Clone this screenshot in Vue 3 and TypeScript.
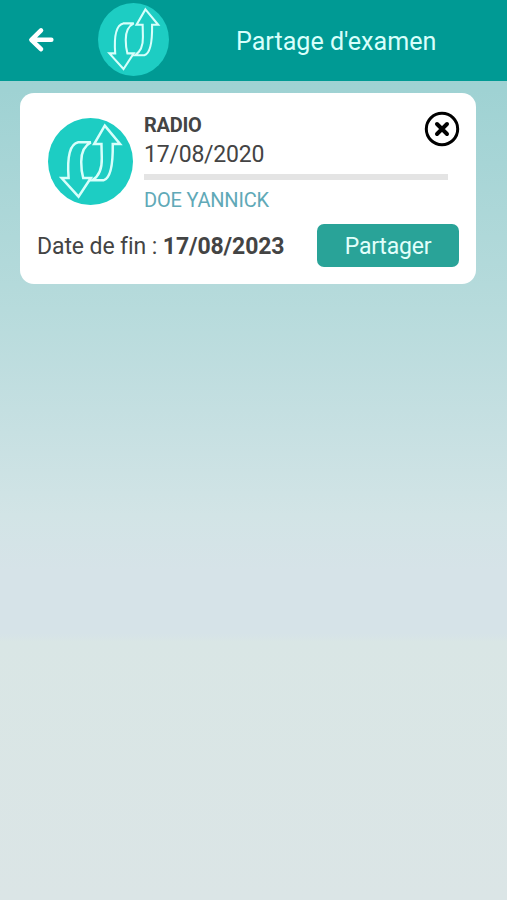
<script setup lang="ts">
import { defineComponent, h, ref } from 'vue'

interface Exam {
  id: number
  type: string
  date: string
  patient: string
  endDate: string
}

const exams = ref<Exam[]>([
  { id: 1, type: 'RADIO', date: '17/08/2020', patient: 'DOE YANNICK', endDate: '17/08/2023' },
])

function removeExam(id: number): void {
  exams.value = exams.value.filter((exam) => exam.id !== id)
}

const AppLogo = defineComponent({
  name: 'AppLogo',
  setup() {
    return () =>
      h('svg', { viewBox: '24 24 256 261', preserveAspectRatio: 'none', 'aria-hidden': 'true' }, [
        h('ellipse', { cx: 152, cy: 154.5, rx: 128, ry: 130.5, fill: '#1dcdc3' }),
        h('g', { fill: 'none', stroke: '#d8fffb', 'stroke-width': 7.5, 'stroke-linejoin': 'miter' }, [
          h('path', { d: 'M115 97H153C133 107 124 130 124 155C124 175 126 190 130 204H153L116 260L65 204H86C82 150 87 103 115 97Z' }),
          h('path', { d: 'M195 47L241 102H219C220 165 213 205 191 211H157C176 200 187 178 186 145L185 102H163Z' }),
        ]),
      ])
  },
})
</script>

<template>
  <div class="screen">
    <header class="bar">
      <button class="back" type="button" aria-label="Retour">
        <svg viewBox="0 0 26 26" width="26" height="26">
          <path d="M13 3.4L3.4 12.8L13 22.2M4 12.8H23.3" />
        </svg>
      </button>
      <AppLogo class="bar-logo" />
      <h1 class="title">Partage d'examen</h1>
    </header>

    <main class="list">
      <article v-for="exam in exams" :key="exam.id" class="card">
        <div class="top">
          <AppLogo class="card-logo" />
          <div class="info">
            <div class="heading">
              <div class="labels">
                <h2 class="type">{{ exam.type }}</h2>
                <p class="date">{{ exam.date }}</p>
              </div>
              <button class="close" type="button" aria-label="Fermer" @click="removeExam(exam.id)">
                <svg viewBox="0 0 36 36" width="36" height="36">
                  <circle cx="18" cy="18" r="15.7" />
                  <path d="M13 13L23 23M23 13L13 23" />
                </svg>
              </button>
            </div>
            <div class="rule"></div>
            <p class="patient">{{ exam.patient }}</p>
          </div>
        </div>
        <div class="bottom">
          <p class="end"><span>Date de fin : </span><strong>{{ exam.endDate }}</strong></p>
          <button class="share" type="button">Partager</button>
        </div>
      </article>
    </main>
  </div>
</template>

<style>
body {
  margin: 0;
}
</style>

<style scoped>
.screen {
  min-height: 900px;
  font-family: Roboto, sans-serif;
  color: #444;
  background: linear-gradient(180deg, #9dd1d3 0, #9fd2d3 90px, #b7dbdc 310px, #c4dfe1 410px, #d2e4e6 515px, #d6e3e8 570px, #d6e3e8 634px, #d9e6e5 642px, #dbe5e6 900px);
}
h1, h2, p {
  margin: 0;
  font-weight: 400;
  white-space: nowrap;
}
button {
  border: 0;
  padding: 0;
  background: none;
  font-family: inherit;
  cursor: pointer;
}
svg {
  display: block;
}
.bar {
  display: flex;
  align-items: center;
  box-sizing: border-box;
  height: 81px;
  padding: 0 0 2px 28px;
  background: #009a94;
}
.back {
  padding-top: 1px;
}
.back path {
  fill: none;
  stroke: #fff;
  stroke-width: 4.6;
  stroke-linecap: round;
  stroke-linejoin: round;
}
.bar-logo {
  width: 71px;
  height: 73px;
  margin-left: 44px;
}
.title {
  margin: 4px 0 0 67px;
  font-size: 25.1px;
  line-height: 32px;
  color: #d8fffb;
}
.list {
  padding: 12px 31px 0 20px;
}
.card {
  box-sizing: border-box;
  height: 191px;
  padding: 18px 17px 0;
  border-radius: 14px;
  background: #fff;
}
.top {
  display: flex;
  height: 104px;
}
.card-logo {
  flex: none;
  width: 85px;
  height: 87px;
  margin: 7px 11px 0;
}
.info {
  flex: 1;
}
.heading {
  display: flex;
  justify-content: space-between;
  height: 63px;
}
.type {
  font-size: 20px;
  letter-spacing: -0.25px;
  line-height: 28px;
  font-weight: 700;
}
.date {
  font-size: 23px;
  letter-spacing: -0.22px;
  line-height: 32px;
}
.close {
  width: 36px;
  height: 36px;
  margin-right: -1px;
}
.close svg {
  fill: none;
  stroke: #000;
  stroke-width: 3;
  stroke-linecap: round;
}
.close path {
  stroke-width: 4;
}
.rule {
  width: 304px;
  height: 6px;
  background: #e4e4e4;
}
.patient {
  margin-top: 6px;
  font-size: 20px;
  letter-spacing: -0.18px;
  line-height: 28px;
  color: #60a9b7;
}
.bottom {
  display: flex;
  align-items: center;
  justify-content: space-between;
  height: 61px;
}
.end {
  margin-top: 2px;
  font-size: 23px;
  letter-spacing: -0.1px;
  line-height: 30px;
  white-space: pre;
}
.end strong {
  font-weight: 700;
}
.share {
  width: 142px;
  height: 43px;
  padding-top: 2px;
  border-radius: 7px;
  background: #29a398;
  font-size: 23px;
  letter-spacing: -0.2px;
  line-height: 41px;
  color: #e2fffb;
}
</style>
